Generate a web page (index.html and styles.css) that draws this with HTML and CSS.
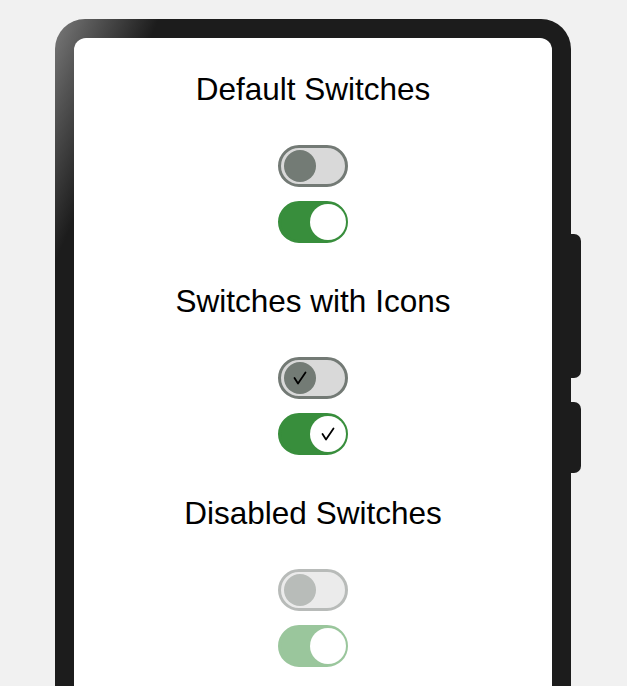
FILE: index.html
```html
<!DOCTYPE html>
<html lang="en">
<head>
<meta charset="utf-8">
<title>Switches</title>
<link rel="stylesheet" href="styles.css">
</head>
<body>
<div class="phone">
  <div class="side-btn side-btn-power"></div>
  <div class="side-btn side-btn-volume"></div>
  <div class="screen">
    <section class="group">
      <h2 class="title">Default Switches</h2>
      <div class="switches">
        <span class="switch"><span class="thumb"></span></span>
        <span class="switch on"><span class="thumb"></span></span>
      </div>
    </section>
    <section class="group">
      <h2 class="title">Switches with Icons</h2>
      <div class="switches">
        <span class="switch"><span class="thumb"><svg class="check" viewBox="0 0 14 14" width="14" height="14"><path d="M1.5 7 L5 12.5 L12.5 1.5"/></svg></span></span>
        <span class="switch on"><span class="thumb"><svg class="check" viewBox="0 0 14 14" width="14" height="14"><path d="M1.5 7 L5 12.5 L12.5 1.5"/></svg></span></span>
      </div>
    </section>
    <section class="group">
      <h2 class="title">Disabled Switches</h2>
      <div class="switches">
        <span class="switch disabled"><span class="thumb"></span></span>
        <span class="switch on disabled"><span class="thumb"></span></span>
      </div>
    </section>
  </div>
</div>
</body>
</html>
```

FILE: styles.css
```css
html, body {
  margin: 0;
  height: 100%;
  overflow: hidden;
  background: #f1f1f1;
}

.phone {
  position: relative;
  margin: 19px 0 0 55px;
  width: 516px;
  height: calc(100vh - 19px);
  box-sizing: border-box;
  padding: 19px 19px 0;
  border-radius: 30px 30px 0 0;
  background: linear-gradient(113deg, #7a7a7a 0%, #555 5%, #1c1c1c 13%);
}

.side-btn {
  position: absolute;
  left: 100%;
  width: 10px;
  background: #1c1c1c;
  border-radius: 0 7px 7px 0;
}

.side-btn-power {
  top: 215px;
  height: 144px;
}

.side-btn-volume {
  top: 383px;
  height: 71px;
}

.screen {
  height: 100%;
  box-sizing: border-box;
  background: #fff;
  border-radius: 12px 12px 0 0;
  padding-top: 33px;
  display: flex;
  flex-direction: column;
  align-items: center;
  overflow: hidden;
}

.group {
  display: flex;
  flex-direction: column;
  align-items: center;
  margin-bottom: 40px;
  flex-shrink: 0;
}

.title {
  margin: 0 0 38px;
  font: 400 31.5px/36px "Liberation Sans", Arial, sans-serif;
  color: #000;
}

.switches {
  display: flex;
  flex-direction: column;
  gap: 14px;
}

.switch {
  position: relative;
  display: block;
  width: 70px;
  height: 42px;
  box-sizing: border-box;
  border: 3px solid #737a75;
  background: #d9d9d9;
  border-radius: 21px;
}

.thumb {
  position: absolute;
  top: 2px;
  left: 3px;
  width: 32px;
  height: 32px;
  border-radius: 50%;
  background: #737b75;
  display: flex;
  align-items: center;
  justify-content: center;
}

.switch.on {
  background: #388e3c;
  border-color: #388e3c;
}

.switch.on .thumb {
  top: 0;
  left: auto;
  right: -1px;
  width: 36px;
  height: 36px;
  background: #fff;
}

.switch.disabled {
  opacity: 0.5;
}

.check {
  display: block;
  fill: none;
  stroke: #000;
  stroke-width: 1.8;
  stroke-linecap: round;
  stroke-linejoin: round;
}
```
